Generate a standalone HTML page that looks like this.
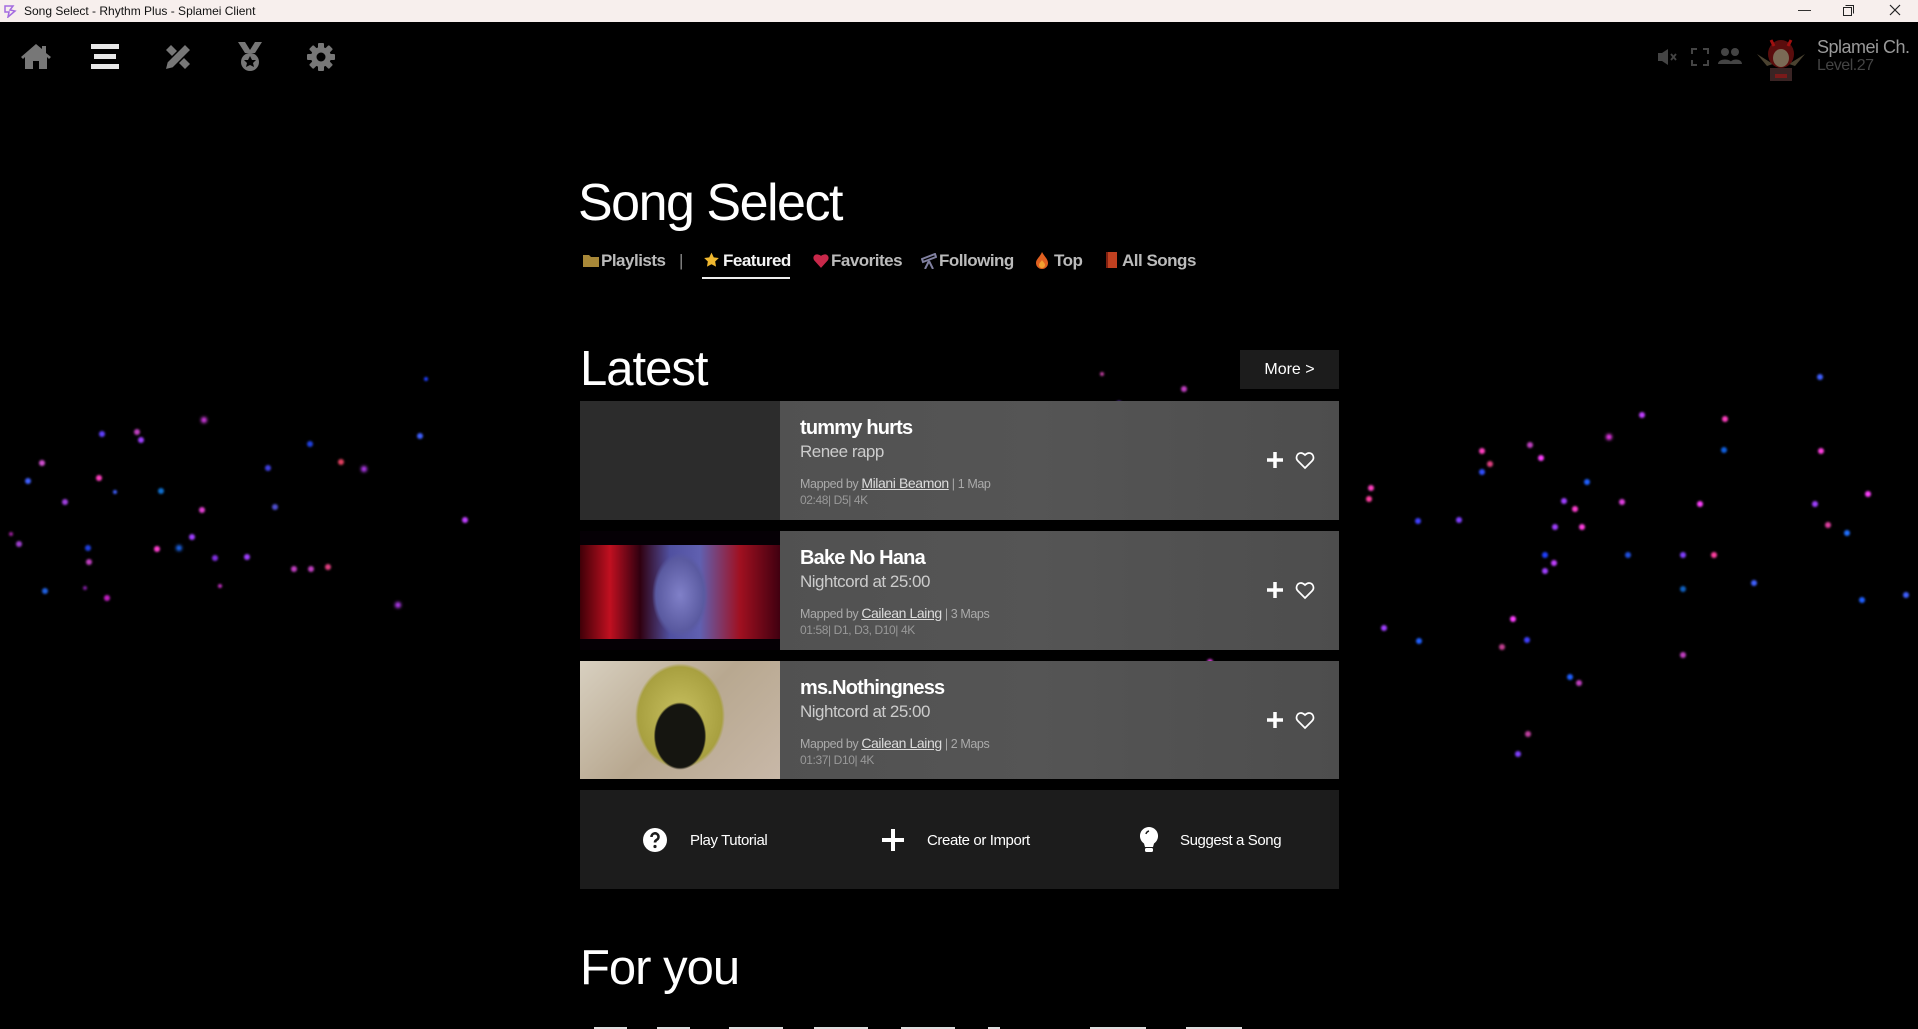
<!DOCTYPE html>
<html><head><meta charset="utf-8"><style>
*{margin:0;padding:0;box-sizing:border-box}
body{width:1918px;height:1029px;overflow:hidden;background:#000;font-family:"Liberation Sans",sans-serif;color:#fff;position:relative}
.tb{position:absolute;left:0;top:0;width:1918px;height:22px;background:#f7efed;color:#111;font-size:12px}
.tb .t{position:absolute;left:24px;top:4px}
.abs{position:absolute}
.dots{position:absolute;left:0;top:0;width:4px;height:4px;border-radius:50%;}
.tab{position:absolute;top:251px;font-size:17px;color:#bbb;font-weight:bold;letter-spacing:-0.5px}
.card{position:absolute;left:580px;width:759px;height:119px;background:linear-gradient(90deg,#4e4e4e,#555 60%,#4d4d4d)}
.thumb{position:absolute;left:0;top:0;width:200px;height:119px}
.ct{position:absolute;left:220px;top:16px;font-size:20px;font-weight:bold;letter-spacing:-0.8px}
.ca{position:absolute;left:220px;top:41px;font-size:17px;color:#ccc;letter-spacing:-0.5px}
.cm{position:absolute;left:220px;top:74px;font-size:12.5px;color:#aaa;letter-spacing:-0.4px}
.cm u{color:#ddd;font-size:14px}
.cs{position:absolute;left:220px;top:92px;font-size:12px;color:#999;letter-spacing:-0.4px}
.ic{position:absolute;left:685px;top:49px}
</style></head><body>
<div class="tb"><svg class="abs" style="left:3px;top:4px" width="14" height="14" viewBox="0 0 14 14"><path d="M2 2h8l-3 4 5 1-7 6 1-5H2z" fill="none" stroke="#a46be0" stroke-width="1.5"/></svg><span class="t">Song Select - Rhythm Plus - Splamei Client</span>
<span class="abs" style="left:1798px;top:2px;font-size:13px">&#8212;</span>
<svg class="abs" style="left:1843px;top:5px" width="11" height="11"><rect x="0.5" y="2.5" width="8" height="8" fill="none" stroke="#222"/><path d="M2.5 0.5h8v8" fill="none" stroke="#222"/></svg>
<svg class="abs" style="left:1889px;top:4px" width="12" height="12"><path d="M1 1l10 10M11 1L1 11" stroke="#222" stroke-width="1.2"/></svg></div>

<svg class="abs" style="left:20px;top:42px" width="32" height="28" viewBox="0 0 32 28"><path d="M16 2L1 15l2 2 2-2v12h8v-8h6v8h8V15l2 2 2-2-5-4V4h-4v3z" fill="#777"/></svg>
<svg class="abs" style="left:91px;top:44px" width="28" height="26"><rect x="0" y="0" width="28" height="5" fill="#e8e8e8"/><rect x="3" y="10" width="22" height="5" fill="#e8e8e8"/><rect x="0" y="20" width="28" height="5" fill="#e8e8e8"/></svg>
<svg class="abs" style="left:163px;top:42px" width="30" height="30" viewBox="0 0 30 30"><path d="M3 8l5-5 19 19-5 5z" fill="#777"/><path d="M22 2l6 6L10 26l-8 2 2-8z" fill="#777" stroke="#000" stroke-width="1.5"/></svg>
<svg class="abs" style="left:236px;top:42px" width="28" height="30" viewBox="0 0 28 30"><path d="M2 0h7l5 8 5-8h7l-7 11H9z" fill="#777"/><circle cx="14" cy="20" r="9" fill="#777"/><path d="M14 14l2 4h4l-3 3 1 4-4-2-4 2 1-4-3-3h4z" fill="#000"/></svg>
<svg class="abs" style="left:307px;top:43px" width="28" height="28" viewBox="0 0 28 28"><g fill="#777"><circle cx="14" cy="14" r="10"/><rect x="11" y="0" width="6" height="28" rx="1"/><rect x="0" y="11" width="28" height="6" rx="1"/><rect x="11" y="0" width="6" height="28" rx="1" transform="rotate(45 14 14)"/><rect x="11" y="0" width="6" height="28" rx="1" transform="rotate(-45 14 14)"/></g><circle cx="14" cy="14" r="4.5" fill="#000"/></svg>

<svg class="abs" style="left:1658px;top:49px" width="22" height="16"><path d="M0 4h4l6-4v16l-6-4H0z" fill="#444"/><path d="M13 5l5 6M18 5l-5 6" stroke="#444" stroke-width="1.8"/></svg>
<svg class="abs" style="left:1691px;top:48px" width="18" height="18"><path d="M1 6V1h5M12 1h5v5M17 12v5h-5M6 17H1v-5" fill="none" stroke="#444" stroke-width="2"/></svg>
<svg class="abs" style="left:1718px;top:48px" width="24" height="16"><circle cx="7" cy="4" r="4" fill="#444"/><circle cx="17" cy="4" r="4" fill="#444"/><path d="M0 16c0-6 14-6 14 0zM12 16c0-6 12-6 12 0z" fill="#444"/></svg>
<svg class="abs" style="left:1757px;top:36px" width="48" height="45" viewBox="0 0 48 45"><path d="M0 18l10 12 6-2z M48 18l-10 12-6-2z" fill="#4a4230"/><ellipse cx="24" cy="18" rx="13" ry="14" fill="#5a0d0d"/><ellipse cx="24" cy="22" rx="8" ry="9" fill="#7a6a55"/><rect x="13" y="32" width="22" height="13" fill="#3a2424"/><rect x="18" y="38" width="12" height="4" fill="#7a1a1a"/><path d="M14 4l3 6M34 4l-3 6" stroke="#a01010" stroke-width="3"/></svg>
<div class="abs" style="left:1817px;top:37px;font-size:18px;color:#999;letter-spacing:-0.5px">Splamei Ch.</div>
<div class="abs" style="left:1817px;top:57px;font-size:16px;color:#444;letter-spacing:-0.5px">Level.27</div>

<div class="dots" style="box-shadow:
202px 418px 3px 1px #e040f0,100px 432px 2px 1px #6040ff,40px 461px 2px 1px #d050d0,26px 479px 2px 1px #4060ff,135px 430px 2px 1px #c040c0,139px 438px 2px 1px #a040ff,97px 476px 2px 1px #ff40c0,113px 490px 2px 0 #4060ff,159px 489px 2px 1px #1070d0,63px 500px 2px 1px #a040e0,177px 546px 3px 1px #2070ff,190px 535px 2px 1px #a040ff,200px 508px 2px 1px #e040d0,155px 547px 2px 1px #ff40d0,86px 546px 2px 1px #2040e0,245px 555px 2px 1px #a040ff,17px 542px 2px 1px #a040d0,87px 560px 2px 1px #c040c0,213px 556px 2px 1px #8030e0,266px 466px 2px 1px #4040e0,218px 584px 2px 0 #c030c0,292px 567px 2px 1px #c040c0,309px 567px 2px 1px #c040c0,326px 565px 2px 1px #e04080,362px 467px 3px 1px #c040ff,339px 460px 2px 1px #e04060,396px 603px 3px 1px #c040ff,308px 442px 2px 1px #2040e0,273px 505px 2px 1px #5050d0,43px 589px 2px 1px #2060e0,83px 586px 2px 0 #8020a0,418px 434px 2px 1px #4060ff,463px 518px 2px 1px #c040ff,424px 377px 2px 0 #2040ff,9px 532px 2px 0 #a020a0,105px 596px 2px 1px #c020c0,
1480px 449px 2px 1px #ff40c0,1488px 462px 2px 1px #e04080,1480px 470px 2px 1px #3050ff,1528px 443px 2px 1px #c040c0,1539px 456px 2px 1px #ff40ff,1607px 435px 3px 1px #ff40ff,1640px 413px 2px 1px #c040ff,1722px 448px 2px 1px #1060e0,1723px 417px 2px 1px #ff40c0,1818px 375px 2px 1px #4060ff,1819px 449px 2px 1px #ff40e0,1585px 480px 2px 1px #2060ff,1620px 500px 2px 1px #e040e0,1369px 486px 2px 1px #ff40c0,1367px 497px 2px 1px #ff40a0,1457px 518px 2px 1px #8040ff,1573px 507px 2px 1px #ff40d0,1562px 499px 2px 1px #a040ff,1698px 502px 2px 1px #ff40ff,1813px 502px 2px 1px #a040ff,1826px 523px 2px 1px #e040a0,1845px 531px 2px 1px #2070ff,1553px 525px 2px 1px #a040ff,1580px 525px 2px 1px #ff40e0,1681px 553px 2px 1px #8040ff,1543px 553px 2px 1px #2040ff,1712px 553px 2px 1px #ff40a0,1416px 519px 2px 1px #4040ff,1543px 569px 2px 1px #a040ff,1626px 553px 2px 1px #2050e0,1552px 561px 2px 1px #c040ff,1681px 587px 2px 1px #1060c0,1752px 581px 2px 1px #4060ff,1681px 653px 2px 1px #c040c0,1511px 617px 2px 1px #ff40ff,1500px 645px 2px 1px #c04090,1525px 638px 2px 1px #4040ff,1568px 675px 2px 1px #2060ff,1577px 681px 2px 1px #c040c0,1417px 639px 2px 1px #2060ff,1382px 626px 2px 1px #a040ff,1860px 598px 2px 1px #2060ff,1516px 752px 2px 1px #8040ff,1526px 732px 2px 1px #c040a0,1904px 593px 2px 1px #4060ff,1866px 492px 2px 1px #ff40ff,1208px 660px 2px 1px #e040e0,1117px 402px 2px 1px #8040ff,1182px 387px 2px 1px #c040c0,1100px 372px 2px 0 #c040a0"></div>

<div class="abs" style="left:578px;top:173px;font-size:52px;letter-spacing:-1.5px">Song Select</div>

<svg class="abs" style="left:583px;top:254px" width="16" height="13"><path d="M0 1h6l2 2h8v10H0z" fill="#a88838"/></svg>
<div class="tab" style="left:601px">Playlists</div>
<div class="tab" style="left:679px;color:#888;font-weight:normal">|</div>
<svg class="abs" style="left:703px;top:252px" width="17" height="16" viewBox="0 0 24 24"><path d="M12 1l3.4 7 7.6 1-5.5 5.3L18.8 22 12 18.3 5.2 22l1.3-7.7L1 9l7.6-1z" fill="#f0b830"/></svg>
<div class="tab" style="left:723px;color:#f4f4f4">Featured</div>
<div class="abs" style="left:702px;top:277px;width:88px;height:2px;background:#eee"></div>
<svg class="abs" style="left:813px;top:253px" width="16" height="15" viewBox="0 0 24 22"><path d="M12 22L2 11C-2 6 3-2 12 4c9-6 14 2 10 7z" fill="#c8284a"/></svg>
<div class="tab" style="left:831px">Favorites</div>
<svg class="abs" style="left:921px;top:253px" width="16" height="16"><path d="M1 6l13-5 1 3-13 5zM8 8l-4 8M8 8l4 8" stroke="#8080a0" stroke-width="2"/></svg>
<div class="tab" style="left:939px">Following</div>
<svg class="abs" style="left:1036px;top:252px" width="12" height="17" viewBox="0 0 12 17"><path d="M6 0C8 4 12 7 12 11a6 6 0 0 1-12 0C0 7 4 5 6 0z" fill="#e06020"/><path d="M6 8c1 2 3 3 3 5a3 3 0 0 1-6 0c0-2 2-3 3-5z" fill="#f0a030"/></svg>
<div class="tab" style="left:1054px">Top</div>
<div class="abs" style="left:1106px;top:252px;width:11px;height:16px;background:#c04020;border-left:2px solid #802010"></div>
<div class="tab" style="left:1122px">All Songs</div>

<div class="abs" style="left:580px;top:341px;font-size:49px;font-weight:300;letter-spacing:-1px">Latest</div>
<div class="abs" style="left:1240px;top:350px;width:99px;height:39px;background:#1c1c1c;font-size:16px;text-align:center;line-height:39px">More &gt;</div>

<div class="card" style="top:401px"><div class="thumb" style="background:#2c2c2c"></div>
<div class="ct">tummy hurts</div><div class="ca">Renee rapp</div>
<div class="cm">Mapped by <u>Milani Beamon</u> | 1 Map</div><div class="cs">02:48| D5| 4K</div>
<svg class="ic" width="50" height="20"><path d="M10 2v16M2 10h16" stroke="#fff" stroke-width="3.5"/><path d="M40 18l-7-7c-3-3-1-8 3-8 2 0 3 1 4 2 1-1 2-2 4-2 4 0 6 5 3 8z" fill="none" stroke="#fff" stroke-width="1.7"/></svg></div>

<div class="card" style="top:531px"><div class="thumb" style="background:#050005"><div class="abs" style="left:0;top:14px;width:200px;height:94px;background:radial-gradient(ellipse 40px 60px at 100px 50px,#8080c8,#5a5aa0 60%,transparent 70%),linear-gradient(90deg,#400008,#c01020 15%,#300010 30%,#5050a0 45%,#6060b0 60%,#a01020 80%,#400010)"></div></div>
<div class="ct">Bake No Hana</div><div class="ca">Nightcord at 25:00</div>
<div class="cm">Mapped by <u>Cailean Laing</u> | 3 Maps</div><div class="cs">01:58| D1, D3, D10| 4K</div>
<svg class="ic" width="50" height="20"><path d="M10 2v16M2 10h16" stroke="#fff" stroke-width="3.5"/><path d="M40 18l-7-7c-3-3-1-8 3-8 2 0 3 1 4 2 1-1 2-2 4-2 4 0 6 5 3 8z" fill="none" stroke="#fff" stroke-width="1.7"/></svg></div>

<div class="card" style="top:661px;height:118px"><div class="thumb" style="height:118px;background:radial-gradient(ellipse 35px 45px at 100px 75px,#151510 70%,transparent 75%),radial-gradient(ellipse 60px 70px at 100px 55px,#c8c060,#a8a040 70%,transparent 75%),linear-gradient(135deg,#d8d0c0,#b8a890 50%,#c8b8a8)"></div>
<div class="ct">ms.Nothingness</div><div class="ca">Nightcord at 25:00</div>
<div class="cm">Mapped by <u>Cailean Laing</u> | 2 Maps</div><div class="cs">01:37| D10| 4K</div>
<svg class="ic" width="50" height="20"><path d="M10 2v16M2 10h16" stroke="#fff" stroke-width="3.5"/><path d="M40 18l-7-7c-3-3-1-8 3-8 2 0 3 1 4 2 1-1 2-2 4-2 4 0 6 5 3 8z" fill="none" stroke="#fff" stroke-width="1.7"/></svg></div>

<div class="abs" style="left:580px;top:790px;width:759px;height:99px;background:#1c1c1c"></div>
<svg class="abs" style="left:643px;top:828px" width="24" height="24" viewBox="0 0 24 24"><circle cx="12" cy="12" r="12" fill="#fff"/><path d="M8.5 9a3.5 3.5 0 1 1 5 3c-1 .6-1.5 1-1.5 2.5" fill="none" stroke="#1c1c1c" stroke-width="2.6"/><circle cx="12" cy="18.5" r="1.6" fill="#1c1c1c"/></svg>
<div class="abs" style="left:690px;top:832px;font-size:15px;letter-spacing:-0.4px">Play Tutorial</div>
<svg class="abs" style="left:882px;top:829px" width="22" height="22"><path d="M11 0v22M0 11h22" stroke="#fff" stroke-width="4"/></svg>
<div class="abs" style="left:927px;top:832px;font-size:15px;letter-spacing:-0.4px">Create or Import</div>
<svg class="abs" style="left:1140px;top:827px" width="18" height="26" viewBox="0 0 18 26"><path d="M9 0a9 9 0 0 1 5 16.5L13 20H5l-1-3.5A9 9 0 0 1 9 0z" fill="#fff"/><rect x="5" y="21" width="8" height="4" rx="1.5" fill="#fff"/><path d="M6 7a4 4 0 0 1 3-3" stroke="#1c1c1c" stroke-width="1.5" fill="none"/></svg>
<div class="abs" style="left:1180px;top:832px;font-size:15px;letter-spacing:-0.4px">Suggest a Song</div>

<div class="abs" style="left:580px;top:940px;font-size:49px;font-weight:300;letter-spacing:-1px">For you</div>
<div class="abs" style="left:594px;top:1027px;width:33px;height:2px;background:#ddd"></div>
<div class="abs" style="left:657px;top:1027px;width:33px;height:2px;background:#ddd"></div>
<div class="abs" style="left:729px;top:1027px;width:54px;height:2px;background:#ddd"></div>
<div class="abs" style="left:814px;top:1027px;width:54px;height:2px;background:#ddd"></div>
<div class="abs" style="left:901px;top:1027px;width:54px;height:2px;background:#ddd"></div>
<div class="abs" style="left:988px;top:1027px;width:12px;height:2px;background:#ddd"></div>
<div class="abs" style="left:1090px;top:1027px;width:56px;height:2px;background:#ddd"></div>
<div class="abs" style="left:1186px;top:1027px;width:56px;height:2px;background:#ddd"></div>
</body></html>
